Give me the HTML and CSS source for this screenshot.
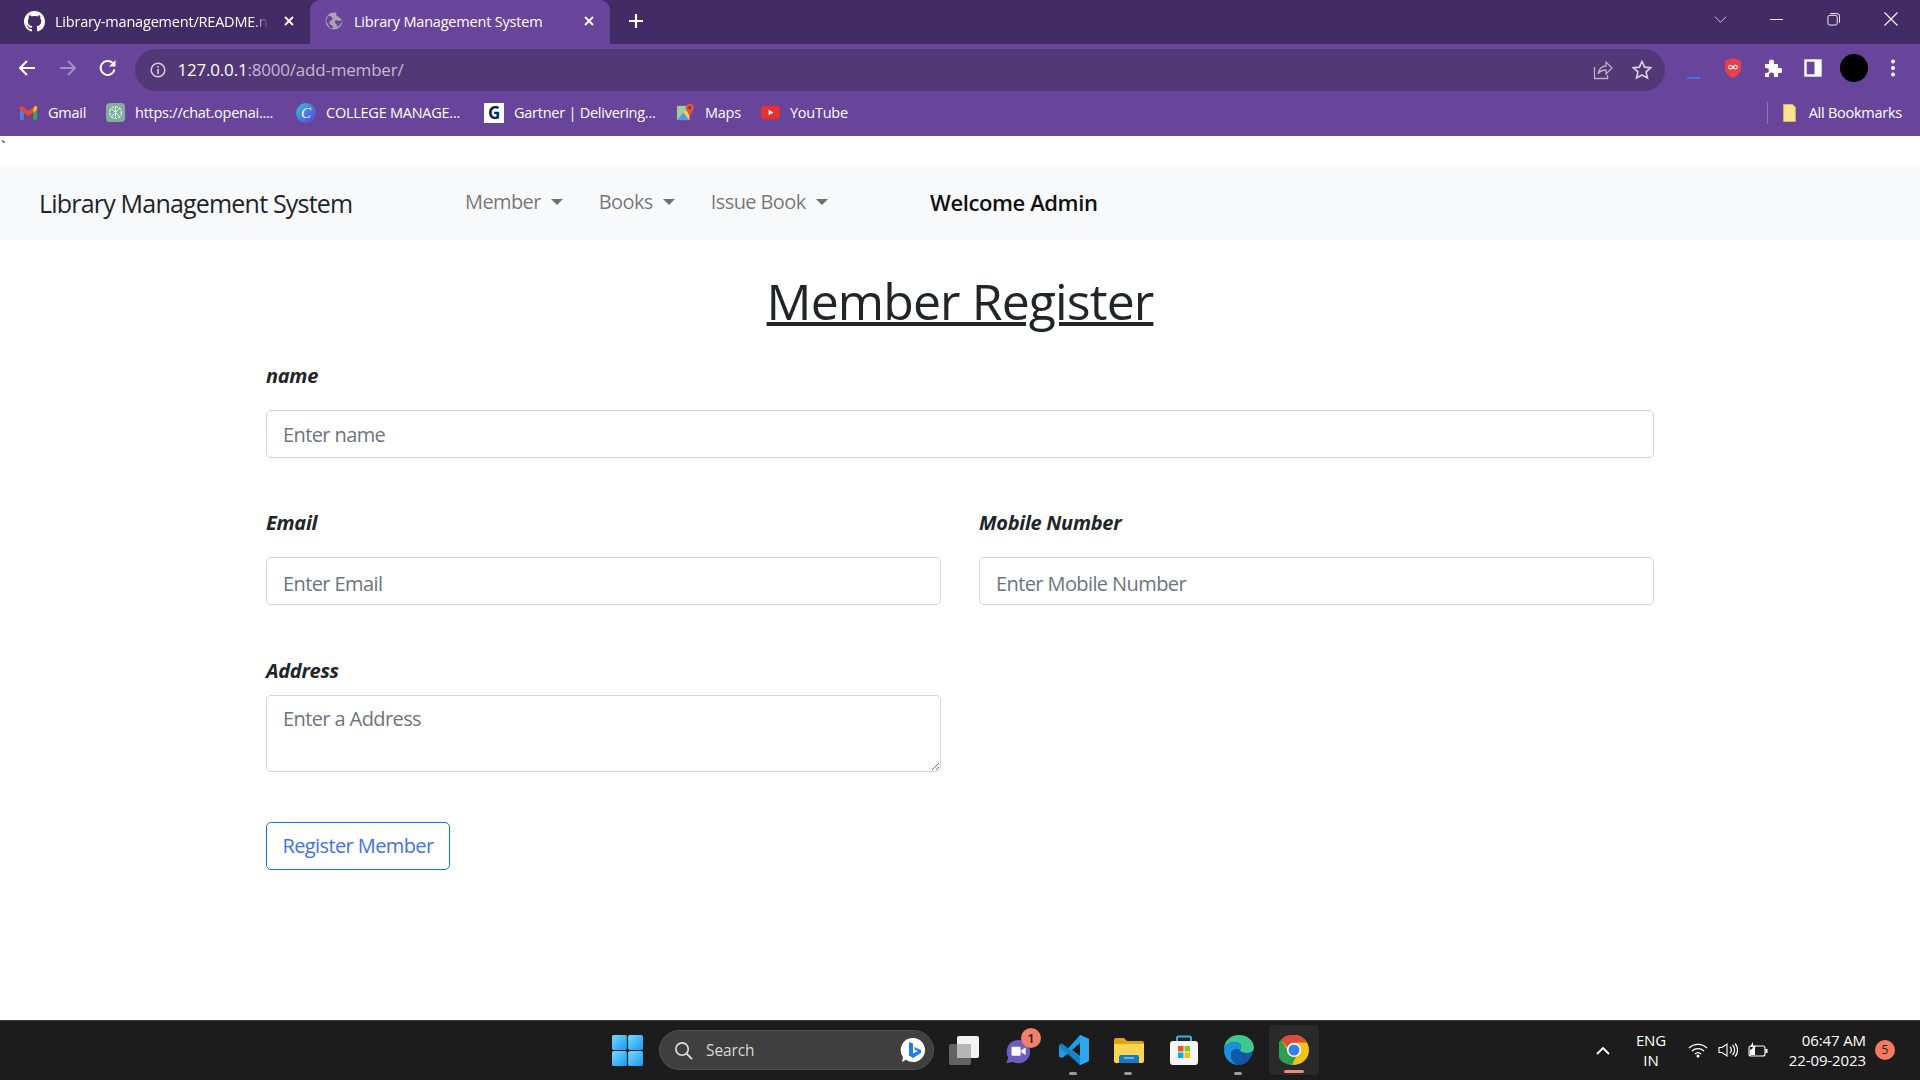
FILE: index.html
```html
<!DOCTYPE html>
<html lang="en">
<head>
  <meta charset="UTF-8">
  <title>Library Management System</title>
  <link rel="stylesheet" href="styles.css">
</head>
<body>
  <div class="screen">

    <!-- browser tabs -->
    <div class="tabstrip">
      <div class="tab">
        <svg class="tab-icon" viewBox="0 0 16 16"><path fill="#fff" d="M8 0C3.58 0 0 3.58 0 8c0 3.54 2.29 6.53 5.47 7.59.4.07.55-.17.55-.38 0-.19-.01-.82-.01-1.49-2.01.37-2.53-.49-2.69-.94-.09-.23-.48-.94-.82-1.13-.28-.15-.68-.52-.01-.53.63-.01 1.08.58 1.23.82.72 1.21 1.87.87 2.33.66.07-.52.28-.87.51-1.07-1.78-.2-3.64-.89-3.64-3.95 0-.87.31-1.59.82-2.15-.08-.2-.36-1.02.08-2.12 0 0 .67-.21 2.2.82.64-.18 1.32-.27 2-.27s1.36.09 2 .27c1.53-1.04 2.2-.82 2.2-.82.44 1.1.16 1.92.08 2.12.51.56.82 1.27.82 2.15 0 3.07-1.87 3.75-3.65 3.95.29.25.54.73.54 1.48 0 1.07-.01 1.93-.01 2.2 0 .21.15.46.55.38A8.013 8.013 0 0016 8c0-4.42-3.58-8-8-8z"/></svg>
        <span class="tab-title tab-title-fade">Library-management/README.n</span>
        <svg class="tab-close" viewBox="0 0 12 12"><path d="M2 2l8 8M10 2l-8 8" stroke="#fff" stroke-width="1.8"/></svg>
      </div>
      <div class="tab tab-active">
        <svg class="tab-icon-small" viewBox="0 0 18 18"><circle cx="9" cy="9" r="8.5" fill="#a9a3b5"/><path d="M3 4c3 0 5 1 4.500 3S4 8 4.500 11 8 12 8 16l-3 0-4-7zM11 1c0 3 1 3 3 4l3 3-3 1c-2-1-4-1-4 1s3 2 2 5l3-2 3-5-2-6z" fill="#68449a"/></svg>
        <span class="tab-title">Library Management System</span>
        <svg class="tab-close" viewBox="0 0 12 12"><path d="M2 2l8 8M10 2l-8 8" stroke="#fff" stroke-width="1.8"/></svg>
      </div>
      <svg class="new-tab" viewBox="0 0 16 16"><path d="M8 1v14M1 8h14" stroke="#fff" stroke-width="2.2"/></svg>
      <div class="window-controls">
        <svg viewBox="0 0 14 14" class="win-chevron"><path d="M1 4l6 6 6-6" fill="none" stroke="#d8d0e4" stroke-width="1"/></svg>
        <svg viewBox="0 0 14 14" class="win-min"><path d="M0 7h14" stroke="#fff" stroke-width="1.1"/></svg>
        <svg viewBox="0 0 14 14" class="win-max"><rect x="1" y="3" width="10" height="10.500" rx="2" fill="none" stroke="#fff"/><path d="M3.500 1h7a3 3 0 0 1 3 3v7" fill="none" stroke="#fff"/></svg>
        <svg viewBox="0 0 14 14" class="win-close"><path d="M.5.500l13 13M13.500.500l-13 13" stroke="#fff" stroke-width="1.1"/></svg>
      </div>
    </div>

    <!-- address bar -->
    <div class="toolbar">
      <svg class="nav-btn" viewBox="0 0 18 18"><path d="M17 9H2M9 2L2 9l7 7" fill="none" stroke="#fff" stroke-width="2"/></svg>
      <svg class="nav-btn" viewBox="0 0 18 18"><path d="M1 9h15M9 2l7 7-7 7" fill="none" stroke="#a48fc4" stroke-width="2"/></svg>
      <svg class="nav-btn" viewBox="0 0 18 18"><path d="M15.500 10.500A7 7 0 1 1 13.500 3.800" fill="none" stroke="#fff" stroke-width="2"/><path d="M16.500 1v6.500H10z" fill="#fff"/></svg>
      <div class="omnibox">
        <svg class="info-icon" viewBox="0 0 16 16"><circle cx="8" cy="8" r="6.800" fill="none" stroke="#d5cfdf" stroke-width="1.500"/><path d="M8 7v5M8 4v1.800" stroke="#d5cfdf" stroke-width="1.600"/></svg>
        <span class="url">127.0.0.1<span class="url-dim">:8000/add-member/</span></span>
        <svg class="omni-share" viewBox="0 0 20 20"><path d="M1.500 7v11.500h13V15M5 14c1-5 4-8 8-8V2l6 6-6 6v-4c-3 0-6 1-8 4z" fill="none" stroke="#b8b0c6" stroke-width="1.300"/></svg>
        <svg class="omni-star" viewBox="0 0 20 20"><path d="M10 1.500l2.600 5.600 6 .7-4.500 4.100 1.300 6L10 15l-5.400 2.900 1.300-6L1.400 7.800l6-.7z" fill="none" stroke="#d5cfdf" stroke-width="1.700"/></svg>
      </div>
      <span class="ext-dash"></span>
      <svg class="ext-shield" viewBox="0 0 20 22"><path d="M10 0l9 3v8c0 5-4 9-9 11C5 20 1 16 1 11V3z" fill="#e5404e"/><path d="M10 10c-1.500-2-3-2.500-4-1.700s-1 2.600 0 3.400 2.500.3 4-1.700c1.500-2 3-2.500 4-1.700s1 2.600 0 3.400-2.500.3-4-1.700z" fill="none" stroke="#fff" stroke-width="1.200"/></svg>
      <svg class="ext-puzzle" viewBox="0 0 18 18"><path d="M1 5h4V3a2.500 2.500 0 0 1 5 0v2h4v4h2a2.500 2.500 0 0 1 0 5h-2v4h-4v-2a2.500 2.500 0 0 0-5 0v2H1v-4h1.500a2.500 2.500 0 0 0 0-5H1z" fill="#fff"/></svg>
      <svg class="ext-panel" viewBox="0 0 18 18"><rect x="1.500" y="1.500" width="15" height="15" fill="none" stroke="#fff" stroke-width="2.400"/><rect x="10.500" y="1" width="6" height="16" fill="#fff"/></svg>
      <span class="avatar"></span>
      <svg class="menu-dots" viewBox="0 0 4 18"><circle cx="2" cy="2.500" r="2" fill="#fff"/><circle cx="2" cy="9" r="2" fill="#fff"/><circle cx="2" cy="15.500" r="2" fill="#fff"/></svg>
    </div>

    <!-- bookmarks -->
    <div class="bookmarks">
      <div class="bookmark">
        <svg class="bm-icon" viewBox="0 0 20 16"><path d="M1 6h4v9.500H2a1 1 0 0 1-1-1z" fill="#4b87e0"/><path d="M15 6h4v8.500a1 1 0 0 1-1 1h-3z" fill="#34a853"/><path d="M1 2.500a1.500 1.500 0 0 1 2.400-1.200L10 6.500l6.600-5.200A1.500 1.500 0 0 1 19 2.500V5l-9 7-9-7z" fill="#e8453c"/><path d="M15 4.600l1.600-3.300A1.500 1.500 0 0 1 19 2.500V5l-4 3z" fill="#f6bb18"/></svg>
        <span>Gmail</span>
      </div>
      <div class="bookmark">
        <svg class="bm-icon" viewBox="0 0 20 20"><rect width="20" height="20" rx="4" fill="#7fb09f"/><circle cx="10" cy="10" r="6.200" fill="none" stroke="#e6efe9" stroke-width="1.300" stroke-dasharray="3 1"/><path d="M6 6l8 8M14 6l-8 8M10 4v12" stroke="#e6efe9" stroke-width="1"/></svg>
        <span>https://chat.openai....</span>
      </div>
      <div class="bookmark">
        <span class="canva-icon">C</span>
        <span>COLLEGE MANAGE...</span>
      </div>
      <div class="bookmark">
        <span class="gartner-icon">G</span>
        <span>Gartner | Delivering...</span>
      </div>
      <div class="bookmark">
        <svg class="bm-icon" viewBox="0 0 20 20"><path d="M1 3h13v15H1z" fill="#9ad0a0"/><path d="M1 18l7-8 6 8z" fill="#5d94ea"/><path d="M8 10l6-6v14z" fill="#f5d34f"/><circle cx="14.500" cy="5" r="4.300" fill="#d9534a"/><path d="M11 8l3.500 6L18 8z" fill="#d9534a"/><circle cx="14.500" cy="5" r="1.500" fill="#8e2a25"/></svg>
        <span>Maps</span>
      </div>
      <div class="bookmark">
        <svg class="bm-icon" viewBox="0 0 20 14"><rect width="20" height="14" rx="4" fill="#e8312a"/><path d="M8 4l5 3-5 3z" fill="#fff"/></svg>
        <span>YouTube</span>
      </div>
      <div class="all-bookmarks">
        <svg class="bm-folder" viewBox="0 0 14 20"><path d="M.5.500h10l3 3v16H.5z" fill="#fbe391" stroke="#e2bd55"/></svg>
        <span>All Bookmarks</span>
      </div>
    </div>

    <!-- page -->
    <main class="page">
      <div class="stray">`</div>
      <nav class="navbar">
        <a class="brand">Library Management System</a>
        <ul class="nav-links">
          <li class="dropdown">Member</li>
          <li class="dropdown">Books</li>
          <li class="dropdown">Issue Book</li>
        </ul>
        <span class="welcome">Welcome Admin</span>
      </nav>

      <h1 class="title">Member Register</h1>

      <form class="member-form">
        <div class="field field-name">
          <label for="name">name</label>
          <input id="name" type="text" placeholder="Enter name">
        </div>
        <div class="form-row">
          <div class="field">
            <label for="email">Email</label>
            <input id="email" type="email" placeholder="Enter Email">
          </div>
          <div class="field">
            <label for="mobile">Mobile Number</label>
            <input id="mobile" type="text" placeholder="Enter Mobile Number">
          </div>
        </div>
        <div class="form-row form-row-address">
          <div class="field">
            <label for="address">Address</label>
            <textarea id="address" placeholder="Enter a Address"></textarea>
          </div>
        </div>
        <button type="button" class="btn-outline">Register Member</button>
      </form>
    </main>

    <!-- windows taskbar -->
    <footer class="taskbar">
      <svg class="start-icon" viewBox="0 0 30 30">
        <defs><linearGradient id="winBlue" x1="0" y1="0" x2="1" y2="1"><stop offset="0" stop-color="#7fd6fb"/><stop offset="1" stop-color="#0f9cf5"/></linearGradient></defs>
        <rect x="0" y="0" width="14.400" height="14.400" rx="1.500" fill="url(#winBlue)"/><rect x="15.600" y="0" width="14.400" height="14.400" rx="1.500" fill="url(#winBlue)"/><rect x="0" y="15.600" width="14.400" height="14.400" rx="1.500" fill="url(#winBlue)"/><rect x="15.600" y="15.600" width="14.400" height="14.400" rx="1.500" fill="url(#winBlue)"/>
      </svg>
      <div class="search-pill">
        <svg class="search-icon" viewBox="0 0 20 20"><circle cx="8.500" cy="8.500" r="6.500" fill="none" stroke="#dcdcdc" stroke-width="1.800"/><path d="M13 13l6 6" stroke="#dcdcdc" stroke-width="2"/></svg>
        <span>Search</span>
        <svg class="bing-icon" viewBox="0 0 26 26"><path d="M13 1a12 12 0 1 1-7 21.700L2 25l1-5A12 12 0 0 1 13 1z" fill="#fff"/><path d="M9 5l4 1.500v10l5-2.500-3-1-1-3 7 3v3l-8 5-4-2.500z" fill="#1b7ef0"/></svg>
      </div>
      <div class="task-slot">
        <svg class="task-icon" viewBox="0 0 30 30"><rect x="8" y="1" width="22" height="22" rx="2" fill="#f2f2f2"/><rect x="0" y="9" width="22" height="21" rx="2" fill="#6e6e6e" fill-opacity=".85"/><rect x="8" y="9" width="14" height="14" fill="#b5b5b5"/></svg>
      </div>
      <div class="task-slot">
        <svg class="task-icon" viewBox="0 0 36 36"><path d="M17 6a14 14 0 1 1-6 26.500L3 34l2-7A14 14 0 0 1 17 6z" fill="#6a5fc0"/><rect x="9" y="14" width="11" height="11" rx="1.500" fill="#fff"/><path d="M21 18l5-3v9l-5-3z" fill="#fff"/></svg>
        <span class="task-badge">1</span>
      </div>
      <div class="task-slot task-open">
        <svg class="task-icon" viewBox="0 0 30 30"><path d="M21 0l9 4v22l-9 4-12-11.500-6 4.500-3-1.500v-11L3 9l6 4.500z" fill="#1f9ce4"/><path d="M21 8l-8 7 8 6z" fill="#1c1c1c"/><path d="M21 0l9 4v22l-9 4z" fill="#2aa7ef"/><path d="M0 9.500L3 8l18 14.500V30L0 12z" fill="#0d76bb" fill-opacity=".6"/></svg>
      </div>
      <div class="task-slot task-open">
        <svg class="task-icon" viewBox="0 0 30 30"><path d="M0 5a2 2 0 0 1 2-2h8l3 3h15a2 2 0 0 1 2 2v3H0z" fill="#dca416"/><path d="M0 9h30v17a2 2 0 0 1-2 2H2a2 2 0 0 1-2-2z" fill="#fdd452"/><path d="M5 28v-6a2 2 0 0 1 2-2h16a2 2 0 0 1 2 2v6z" fill="#1578c2"/><path d="M10 23h10" stroke="#7fc4f0" stroke-width="1.500"/></svg>
      </div>
      <div class="task-slot">
        <svg class="task-icon" viewBox="0 0 30 30"><path d="M8 7V3a1.500 1.500 0 0 1 1.500-1.500h11A1.500 1.500 0 0 1 22 3v4" fill="none" stroke="#29b6f0" stroke-width="2"/><rect x="1" y="6" width="28" height="24" rx="3" fill="#f5f5f5"/><rect x="9" y="11" width="5.500" height="5.500" fill="#f1511b"/><rect x="15.500" y="11" width="5.500" height="5.500" fill="#80cc28"/><rect x="9" y="17.500" width="5.500" height="5.500" fill="#00adef"/><rect x="15.500" y="17.500" width="5.500" height="5.500" fill="#fbbc09"/></svg>
      </div>
      <div class="task-slot task-open">
        <svg class="task-icon" viewBox="0 0 30 30"><path d="M15 0c9 0 15 6 15 13 0 3-3 5-7 5-4.500 0-7-1-7-3 0-1 1-1.500 1-3 0-3-3-5-7-5C6 7 1 10 0 15 0 6 6 0 15 0z" fill="#3ec88f"/><path d="M0 15c1-5 6-8 10-8 4 0 7 2 7 5 0 1.500-1 2-1 3-3-2-8-1-9 4-.7 4 2 9 8 11C6 30 0 23 0 15z" fill="#1b8fe0"/><path d="M16 15c0 2 2.500 3 7 3 3 0 5.500-1 6-2-1 7-7 14-14 14-6 0-8.700-7-8-11 1-5 6-6 9-4z" fill="#0c5ba8"/><path d="M16 18c2 4 6 5 10 4-3 5-7 8-11 8 6-2 3-9 1-12z" fill="#1f4f9a"/></svg>
      </div>
      <div class="task-slot task-active">
        <svg class="task-icon" viewBox="0 0 30 30"><circle cx="15" cy="15" r="15" fill="#f2c21b"/><path d="M15 0a15 15 0 0 1 13 7.500H15a7.500 7.500 0 0 0-7 5L2 4.500A15 15 0 0 1 15 0z" fill="#dd4b3e"/><path d="M2 4.500l6.500 11a7.500 7.500 0 0 0 9 5L13 30A15 15 0 0 1 2 4.500z" fill="#2f9e4f"/><circle cx="15" cy="15" r="7" fill="#fff"/><circle cx="15" cy="15" r="5.500" fill="#3a7de8"/></svg>
      </div>
      <div class="tray">
        <svg class="tray-caret" viewBox="0 0 14 9"><path d="M1 8l6-6 6 6" fill="none" stroke="#fff" stroke-width="1.800"/></svg>
        <div class="tray-lang">ENG<br>IN</div>
        <svg class="tray-icon" viewBox="0 0 20 16"><path d="M1 6a13 13 0 0 1 18 0M4 9a9 9 0 0 1 12 0M7 12a4.500 4.500 0 0 1 6 0" fill="none" stroke="#fff" stroke-width="1.300"/><circle cx="10" cy="14" r="1.500" fill="#fff"/></svg>
        <svg class="tray-icon" viewBox="0 0 20 16"><path d="M1 5.500h3L9 2v12l-5-3.500H1z" fill="none" stroke="#fff" stroke-width="1.100"/><path d="M12 5a4 4 0 0 1 0 6M14.500 3a7 7 0 0 1 0 10M17 1.500a9.500 9.500 0 0 1 0 13" fill="none" stroke="#fff" stroke-width="1.200"/></svg>
        <svg class="tray-icon" viewBox="0 0 20 16"><rect x="1" y="4" width="16" height="10" rx="2" fill="none" stroke="#fff" stroke-width="1.100"/><rect x="17.500" y="7" width="2" height="4" fill="#fff"/><path d="M2 13V8l5-3v8z" fill="#fff"/><path d="M5 0L2 5h3L4 9l4-5H5z" fill="#fff"/></svg>
        <div class="tray-clock">06:47 AM<br>22-09-2023</div>
        <span class="tray-badge">5</span>
      </div>
    </footer>
  </div>
</body>
</html>
```

FILE: styles.css
```css
* {
  box-sizing: border-box;
}

html, body {
  margin: 0;
  height: 100%;
  overflow: hidden;
}

body {
  font-family: "Open Sans", "Noto Sans", sans-serif;
  color: #212529;
  background: #fff;
}

.screen {
  width: 1920px;
  height: 1080px;
  display: flex;
  flex-direction: column;
}

/* browser tabs */
.tabstrip {
  height: 44px;
  flex: none;
  background: #432c66;
  display: flex;
  padding-left: 9px;
  color: #fff;
  font-size: 14.5px;
  letter-spacing: -0.2px;
}

.tab {
  width: 301px;
  display: flex;
  align-items: center;
  padding: 0 15px 2px;
  position: relative;
}

.tab-active {
  width: 300px;
  background: #68449a;
  border-radius: 10px 10px 0 0;
}

.tab-icon {
  width: 21px;
  height: 21px;
  flex: none;
}

.tab-icon-small {
  width: 18px;
  height: 18px;
  flex: none;
}

.tab-title {
  flex: 1;
  margin-left: 10px;
  white-space: nowrap;
}

.tab-active .tab-title {
  margin-left: 11px;
}

.tab-title-fade {
  -webkit-mask-image: linear-gradient(to right, #000 92%, transparent);
  mask-image: linear-gradient(to right, #000 92%, transparent);
}

.tab-close {
  width: 12px;
  height: 12px;
  margin-left: 14px;
  flex: none;
}

.new-tab {
  width: 16px;
  height: 16px;
  margin: 13px 0 0 18px;
  flex: none;
}

.window-controls {
  margin-left: auto;
  display: flex;
  align-items: center;
  padding-right: 22px;
  height: 38px;
}

.win-chevron { width: 13px; height: 13px; }
.win-min { width: 13px; height: 13px; margin-left: 43px; }
.win-max { width: 13px; height: 14px; margin-left: 44px; }
.win-close { width: 14px; height: 14px; margin-left: 44px; }

/* address bar */
.toolbar {
  height: 48px;
  flex: none;
  background: #68449a;
  display: flex;
  align-items: center;
  padding: 0 0 0 18px;
}

.nav-btn {
  width: 18px;
  height: 18px;
  margin-right: 22.5px;
  flex: none;
}

.omnibox {
  width: 1530px;
  height: 42px;
  margin: 3px 0 0 -5px;
  border-radius: 21px;
  background: #523876;
  display: flex;
  align-items: center;
  padding-left: 15px;
}

.info-icon {
  width: 16px;
  height: 16px;
  margin-right: 12px;
}

.url {
  color: #fff;
  font-size: 17px;
  letter-spacing: -0.2px;
  margin-top: -1px;
}

.url-dim {
  color: #c3b8d3;
}

.omni-share {
  width: 20px;
  height: 20px;
  margin-left: auto;
}

.omni-star {
  width: 20px;
  height: 20px;
  margin: 0 13px 0 19px;
}

.ext-dash {
  width: 13px;
  height: 2px;
  background: #3b78e7;
  margin: 20px 0 0 22px;
}

.ext-shield { width: 18px; height: 20px; margin-left: 24px; }
.ext-puzzle { width: 18px; height: 18px; margin-left: 22px; }
.ext-panel { width: 18px; height: 18px; margin-left: 22px; }

.avatar {
  width: 28px;
  height: 28px;
  border-radius: 50%;
  background: #000;
  margin-left: 18px;
}

.menu-dots {
  width: 4px;
  height: 18px;
  margin-left: 23px;
}

/* bookmarks */
.bookmarks {
  height: 44px;
  flex: none;
  background: #68449a;
  display: grid;
  grid-template-columns: 87px 190px 188px 192px 85px 100px 1fr auto;
  align-items: center;
  padding: 0 0 3px 19px;
  color: #fff;
  font-size: 14.5px;
  letter-spacing: -0.25px;
}

.bookmark {
  display: flex;
  align-items: center;
  gap: 10px;
  white-space: nowrap;
}

.bm-icon {
  width: 19px;
  height: 19px;
  flex: none;
}

.canva-icon {
  width: 20px;
  height: 20px;
  flex: none;
  border-radius: 50%;
  background: linear-gradient(135deg, #35c3d8, #5a3be0);
  color: #fff;
  font: italic 15px/20px "Liberation Serif", serif;
  text-align: center;
}

.gartner-icon {
  width: 20px;
  height: 20px;
  flex: none;
  background: #fff;
  color: #002856;
  font-weight: 700;
  font-size: 17px;
  line-height: 20px;
  text-align: center;
}

.all-bookmarks {
  display: flex;
  align-items: center;
  border-left: 1px solid #8d72b4;
  height: 22px;
  margin-left: auto;
  padding: 0 18px 0 14px;
}

.bm-folder {
  width: 15px;
  height: 18px;
  margin-right: 12px;
}

/* page */
.page {
  flex: 1;
  min-height: 0;
  font-size: 20px;
  line-height: 1.5;
}

.stray {
  height: 30px;
  padding-left: 1px;
  font-size: 16px;
  line-height: 22px;
}

.navbar {
  height: 74px;
  background: #f8f9fa;
  display: flex;
  align-items: center;
  padding-left: 39px;
}

.brand {
  width: 426px;
  font-size: 25px;
  letter-spacing: -0.8px;
  margin-top: 2px;
  color: #212529;
}

.nav-links {
  display: flex;
  list-style: none;
  margin: -2px 0 0;
  padding: 0;
  width: 465px;
  color: rgba(0, 0, 0, 0.55);
}

.dropdown {
  margin-right: 36px;
  letter-spacing: -0.6px;
}

.dropdown::after {
  content: "";
  display: inline-block;
  margin-left: 10px;
  vertical-align: 4px;
  border-top: 6px solid;
  border-left: 6px solid transparent;
  border-right: 6px solid transparent;
}

.welcome {
  font-size: 22px;
  font-weight: 600;
  color: #111;
  letter-spacing: -0.4px;
  margin-top: -1px;
}

.title {
  margin: 31px 0 0;
  height: 60px;
  text-align: center;
  font-size: 50px;
  font-weight: 500;
  line-height: 60px;
  text-decoration: underline;
  text-decoration-thickness: 4px;
  letter-spacing: -0.9px;
}

.member-form {
  width: 1388px;
  margin: 0 0 0 266px;
}

.field label {
  display: block;
  height: 30px;
  margin-bottom: 19px;
  font-weight: 700;
  font-style: italic;
  letter-spacing: -0.3px;
}

.field-name {
  margin-top: 30px;
}

.form-row {
  display: grid;
  grid-template-columns: 675px 675px;
  column-gap: 38px;
  margin-top: 50px;
}

.form-row-address {
  margin-top: 51px;
}

.form-row-address label {
  margin-bottom: 9px;
}

input, textarea {
  display: block;
  width: 100%;
  height: 48px;
  padding: 8px 16px 7px;
  border: 1px solid #ced4da;
  border-radius: 5px;
  font: inherit;
  letter-spacing: -0.6px;
  color: #212529;
  background: #fff;
}

.form-row input {
  padding: 10px 16px 5px;
}

textarea {
  height: 77px;
}

::placeholder {
  color: #6c757d;
}

.btn-outline {
  display: block;
  margin-top: 50px;
  height: 47.5px;
  width: 184px;
  padding: 0;
  border: 1px solid #0d6efd;
  border-radius: 5px;
  background: #fff;
  color: #3f72e8;
  font: inherit;
  letter-spacing: -0.6px;
}

/* windows taskbar */
.taskbar {
  height: 60px;
  flex: none;
  background: #1c1c1c;
  border-top: 1px solid #3a3a3a;
  display: flex;
  align-items: center;
  padding: 0 0 1px 612px;
  color: #fff;
}

.start-icon {
  width: 31px;
  height: 31px;
  flex: none;
}

.search-pill {
  width: 275px;
  height: 40px;
  margin: 0 2px 0 16px;
  flex: none;
  border-radius: 20px;
  background: #3f3f3f;
  border: 1px solid #505050;
  display: flex;
  align-items: center;
  padding: 0 7px 0 14px;
  font-size: 15.5px;
  color: #d8d8d8;
  letter-spacing: -0.1px;
}

.search-icon {
  width: 19px;
  height: 19px;
  margin-right: 13px;
}

.bing-icon {
  width: 26px;
  height: 26px;
  margin-left: auto;
}

.task-slot {
  width: 55px;
  height: 50px;
  flex: none;
  display: flex;
  align-items: center;
  justify-content: center;
  position: relative;
}

.task-icon {
  width: 30px;
  height: 30px;
}

.task-badge {
  position: absolute;
  top: 3px;
  left: 30px;
  width: 20px;
  height: 20px;
  border-radius: 50%;
  background: #f47f68;
  color: #1c1c1c;
  font-size: 13px;
  font-weight: 600;
  line-height: 20px;
  text-align: center;
}

.task-open::after {
  content: "";
  position: absolute;
  bottom: 0;
  left: 23px;
  width: 8px;
  height: 3px;
  border-radius: 2px;
  background: #9a9a9a;
}

.task-active {
  background: #2a2a2a;
  border-radius: 5px;
  width: 50px;
  margin-left: 3px;
}

.task-active::after {
  content: "";
  position: absolute;
  bottom: 2px;
  left: 15px;
  width: 20px;
  height: 3px;
  border-radius: 2px;
  background: #f08a72;
}

.tray {
  margin-left: auto;
  display: flex;
  align-items: center;
  height: 100%;
  padding-right: 25px;
  font-size: 15px;
  letter-spacing: -0.1px;
}

.tray-caret {
  width: 14px;
  height: 9px;
}

.tray-lang {
  width: 40px;
  margin: 0 17px 0 21px;
  text-align: center;
  line-height: 20px;
}

.tray-icon {
  width: 20px;
  height: 16px;
  margin-right: 10px;
}

.tray-clock {
  width: 85px;
  margin: -1px 0 0 3px;
  text-align: right;
  line-height: 20px;
}

.tray-badge {
  width: 20px;
  height: 20px;
  margin-left: 9px;
  border-radius: 50%;
  background: #f47b5f;
  color: #1c1c1c;
  font-size: 12px;
  line-height: 20px;
  text-align: center;
}
```
